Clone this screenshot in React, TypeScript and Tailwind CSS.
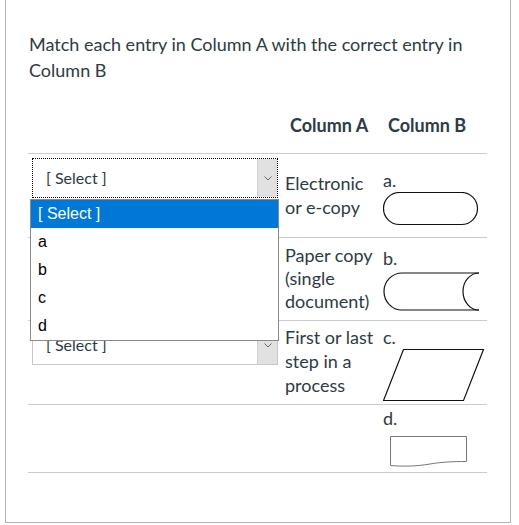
import type { ReactNode } from "react";

const options = ["a", "b", "c", "d"];

function SelectBox({ focused, children }: { focused?: boolean; children?: ReactNode }) {
  return (
    <div className="relative w-[246px]">
      <div
        className={`flex h-[40px] items-center bg-white ${
          focused ? "border border-dotted border-black" : "border border-[#c7c7c7]"
        }`}
      >
        <span className="flex-1 pl-[13px] text-[16px] text-[#2d3b45]">[ Select ]</span>
        <span className="flex h-full w-[20px] items-center justify-center bg-[#e1e1e1] border-l border-[#d0d0d0]">
          <svg width="8" height="5" viewBox="0 0 8 5">
            <path d="M0.5 0.5 L4 4 L7.5 0.5" fill="none" stroke="#666" strokeWidth="1" />
          </svg>
        </span>
      </div>
      {children}
    </div>
  );
}

function OpenList() {
  return (
    <div className="absolute left-[-2px] top-[41px] z-10 w-[249px] border border-[#8a8a8a] bg-white font-['Liberation_Sans',Arial,sans-serif] text-[16px] text-black">
      <div className="flex h-[28px] items-center bg-[#0078d7] pl-[7px] text-white">[ Select ]</div>
      {options.map((o) => (
        <div key={o} className="flex h-[28px] items-center pl-[7px]">
          {o}
        </div>
      ))}
    </div>
  );
}

function Stadium() {
  return (
    <svg width="96" height="34" viewBox="0 0 96 34">
      <rect x="0.5" y="0.5" width="94" height="32" rx="16" fill="none" stroke="#111" strokeWidth="1.2" />
    </svg>
  );
}

function Cylinder() {
  return (
    <svg width="97" height="40" viewBox="0 0 97 40">
      <path d="M96 1 H19 A18 18.5 0 0 0 19 38 H96" fill="none" stroke="#111" strokeWidth="1.2" />
      <path d="M96 1 A16 18.5 0 0 0 96 38" fill="none" stroke="#111" strokeWidth="1.2" />
    </svg>
  );
}

function Parallelogram() {
  return (
    <svg width="102" height="53" viewBox="0 0 102 53">
      <polygon points="20.5,0.5 100.5,0.5 80.5,51.5 0.5,51.5" fill="none" stroke="#111" strokeWidth="1.2" />
    </svg>
  );
}

function DocShape() {
  return (
    <svg width="78" height="32" viewBox="0 0 78 32">
      <path
        d="M0.5 0.5 H76.5 V25.5 C62 25.5 52 26 40 28 C26 30.5 12 30.5 0.5 29.5 Z"
        fill="none"
        stroke="#777"
        strokeWidth="1"
      />
    </svg>
  );
}

export default function App() {
  return (
    <div className="min-h-[525px] bg-white font-['Lato','Open_Sans',sans-serif] text-[#2d3b45]">
      <div className="ml-[5px] h-[523px] w-[506px] border-x border-b border-[#b3b3b3] pt-[31px]">
        <p className="pl-[23px] pr-[20px] text-[18px] leading-[26px]">
          Match each entry in Column A with the correct entry in Column B
        </p>

        <div className="ml-[22px] mt-[30px] w-[459px]">
          {/* header */}
          <div className="flex pb-[16px] text-[18px] font-bold leading-[24px]">
            <div className="w-[254px]" />
            <div className="w-[97px] pl-[8px] whitespace-nowrap">Column A</div>
            <div className="w-[108px] pl-[9px] whitespace-nowrap">Column B</div>
          </div>

          {/* row 1 */}
          <div className="flex h-[84px] border-t border-[#c7cdd1] text-[18px]">
            <div className="w-[254px] pl-[4px] pt-[4px]">
              <SelectBox focused>
                <OpenList />
              </SelectBox>
            </div>
            <div className="w-[97px] pl-[3px] pt-[17px] leading-[24px]">Electronic or e-copy</div>
            <div className="flex w-[108px] flex-col pl-[4px] pt-[14px] leading-[24px]">
              <span>a.</span>
              <Stadium />
            </div>
          </div>

          {/* row 2 */}
          <div className="flex h-[83px] border-t border-[#c7cdd1] text-[18px]">
            <div className="w-[254px] pl-[4px] pt-[4px]">
              <SelectBox />
            </div>
            <div className="w-[97px] pl-[3px] pt-[6px] leading-[23px]">Paper copy (single document)</div>
            <div className="flex w-[108px] flex-col pl-[4px] pt-[8px] leading-[24px]">
              <span>b.</span>
              <div className="mt-[2px]">
                <Cylinder />
              </div>
            </div>
          </div>

          {/* row 3 */}
          <div className="flex h-[84px] border-t border-[#c7cdd1] text-[18px]">
            <div className="w-[254px] pl-[4px] pt-[4px]">
              <SelectBox />
            </div>
            <div className="w-[97px] pl-[3px] pt-[4px] leading-[24px]">First or last step in a process</div>
            <div className="flex w-[108px] flex-col pl-[4px] pt-[4px] leading-[24px]">
              <span>c.</span>
              <Parallelogram />
            </div>
          </div>

          {/* row 4 */}
          <div className="flex h-[69px] border-y border-[#c7cdd1] text-[18px]">
            <div className="w-[254px]" />
            <div className="w-[97px]" />
            <div className="flex w-[108px] flex-col pl-[4px] pt-[1px] leading-[24px]">
              <span>d.</span>
              <div className="ml-[7px] mt-[6px]">
                <DocShape />
              </div>
            </div>
          </div>
        </div>
      </div>
    </div>
  );
}
